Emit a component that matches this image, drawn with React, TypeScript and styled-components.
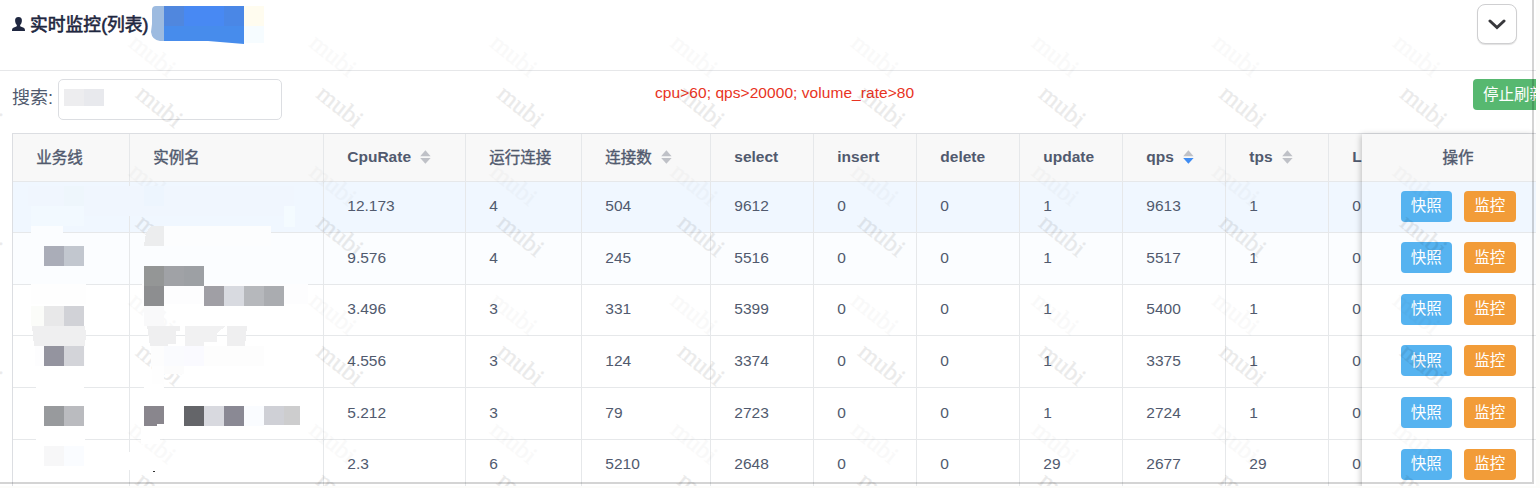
import React from 'react';
import styled, { createGlobalStyle } from 'styled-components';

const GlobalStyle = createGlobalStyle`
  * { box-sizing: border-box; }
  body {
    margin: 0;
    background: #fcfcfa;
    overflow: hidden;
    font-family: "Liberation Sans", "Noto Sans CJK SC", sans-serif;
    color: #515a6e;
  }
`;

const Page = styled.div`
  position: relative;
  width: 1536px;
  height: 486px;
  overflow: hidden;
  background: #fff;
`;

const Header = styled.header`
  display: flex;
  justify-content: space-between;
  align-items: flex-start;
  height: 71px;
  padding: 4px 19px 0 12px;
  border-bottom: 1px solid #e6e7e9;
`;

const Title = styled.h1`
  display: flex;
  align-items: center;
  gap: 5px;
  height: 40px;
  margin: 0;
  font-size: 17.8px;
  font-weight: 400;
  color: #1f2740;
  white-space: nowrap;
  -webkit-text-stroke: 0.6px #1f2740;
`;

const TitleText = styled.span`
  padding-bottom: 3px;
`;

const CollapseButton = styled.button`
  display: flex;
  align-items: center;
  justify-content: center;
  width: 40px;
  height: 40px;
  padding: 0;
  border: 1px solid #cfcfd1;
  border-radius: 8px;
  background: #fff;
  box-shadow: 0 1px 1px rgba(0, 0, 0, 0.12);
`;

const Toolbar = styled.div`
  display: flex;
  align-items: flex-start;
  height: 62px;
  padding: 8px 0 0 12px;
`;

const SearchLabel = styled.label`
  width: 46px;
  line-height: 38px;
  font-size: 18px;
  white-space: nowrap;
`;

const SearchInput = styled.input`
  width: 224px;
  height: 41px;
  border: 1px solid #dcdee2;
  border-radius: 5px;
  background: #fff;
  outline: none;
`;

const Hint = styled.span`
  margin-left: 373px;
  font-size: 15.5px;
  line-height: 28px;
  color: #e83323;
  white-space: nowrap;
  letter-spacing: 0.06px;
`;

const StopButton = styled.button`
  flex: none;
  width: 92px;
  height: 31px;
  margin-left: auto;
  margin-right: -29px;
  padding: 0 0 0 10px;
  border: 0;
  border-radius: 4px;
  background: #57b870;
  color: #fff;
  font: 15.5px/31px "Liberation Sans", "Noto Sans CJK SC", sans-serif;
  text-align: left;
  white-space: nowrap;
`;

const TableFrame = styled.div`
  display: flex;
  margin-left: 12px;
  border-left: 1px solid #dcdee2;
  border-top: 1px solid #dcdee2;
`;

const ScrollArea = styled.div`
  flex: none;
  width: 1349px;
  overflow: hidden;
`;

const FixedArea = styled.div`
  flex: none;
  width: 174px;
  z-index: 1;
  box-shadow: -2px 0 6px -1px rgba(0, 0, 0, 0.24);
`;

const Row = styled.div<{ $height: number; $tone?: string }>`
  display: flex;
  width: max-content;
  min-width: 100%;
  height: ${(p) => p.$height}px;
  background: ${(p) => p.$tone ?? '#fff'};
`;

const Cell = styled.div<{ $width: number; $head?: boolean }>`
  display: flex;
  flex: none;
  align-items: center;
  gap: 9px;
  width: ${(p) => p.$width}px;
  padding: 0 0 2px 23.3px;
  border-right: 1px solid #e6e8ea;
  border-bottom: 1px solid #e6e8ea;
  font-size: 15.5px;
  font-weight: ${(p) => (p.$head ? 700 : 400)};
  white-space: nowrap;
`;

const HeadCjk = styled.span`
  padding-bottom: 2px;
  font-weight: 400;
  -webkit-text-stroke: 0.4px #515a6e;
`;

const ActionCell = styled.div`
  display: flex;
  align-items: center;
  justify-content: center;
  gap: 12px;
  width: 174px;
  padding: 0 0 2px 18px;
  border-bottom: 1px solid #e6e8ea;
  font-size: 15.5px;
`;

const ActionButton = styled.button<{ $color: string }>`
  width: 51.5px;
  height: 31px;
  padding: 0;
  border: 0;
  border-radius: 4px;
  background: ${(p) => p.$color};
  color: #fff;
  font: 15.5px/30px "Liberation Sans", "Noto Sans CJK SC", sans-serif;
`;

const Overlay = styled.svg`
  position: absolute;
  inset: 0;
  z-index: 2;
  pointer-events: none;
`;

const WindowEdge = styled.div`
  position: absolute;
  left: 0;
  top: 0;
  z-index: 3;
  width: 1534px;
  height: 484px;
  border-right: 2px solid rgba(0, 0, 0, 0.17);
  border-bottom: 2px solid rgba(0, 0, 0, 0.17);
  pointer-events: none;
`;

type Column = { label: string; width: number; sort?: 'none' | 'desc' };

const columns: Column[] = [
  { label: '业务线', width: 117 },
  { label: '实例名', width: 194 },
  { label: 'CpuRate', width: 142, sort: 'none' },
  { label: '运行连接', width: 116 },
  { label: '连接数', width: 129, sort: 'none' },
  { label: 'select', width: 103 },
  { label: 'insert', width: 103 },
  { label: 'delete', width: 103 },
  { label: 'update', width: 103 },
  { label: 'qps', width: 103, sort: 'desc' },
  { label: 'tps', width: 103, sort: 'none' },
  { label: 'L', width: 103 },
];

const rows = [
  { height: 51, tone: '#f0f7ff', cells: ['', '', '12.173', '4', '504', '9612', '0', '0', '1', '9613', '1', '0'] },
  { height: 52, tone: '#fbfdff', cells: ['', '', '9.576', '4', '245', '5516', '0', '0', '1', '5517', '1', '0'] },
  { height: 51, cells: ['', '', '3.496', '3', '331', '5399', '0', '0', '1', '5400', '1', '0'] },
  { height: 52, cells: ['', '', '4.556', '3', '124', '3374', '0', '0', '1', '3375', '1', '0'] },
  { height: 52, cells: ['', '', '5.212', '3', '79', '2723', '0', '0', '1', '2724', '1', '0'] },
  { height: 51, cells: ['', '', '2.3', '6', '5210', '2648', '0', '0', '29', '2677', '29', '0'] },
];

const SortIcon = ({ active }: { active: boolean }) => (
  <svg width="12" height="14" viewBox="0 0 12 14">
    <path d="M.2 6.300 5.400.3l5.200 6z" fill="#bfc1c7" />
    <path d="M.2 7.900h10.400L5.400 13.800z" fill={active ? '#3f8cf2' : '#bfc1c7'} />
  </svg>
);

const UserIcon = () => (
  <svg width="13" height="14" viewBox="0 0 13 14">
    <path
      d="M6.500 0C8.900 0 10.100 1.600 9.900 3.900 9.700 5.800 9 7.100 8.200 7.900c-.2 1 .1 1.500 1 1.900l2.500.9c.9.4 1.300 1.300 1.300 3.300H0c0-2 .4-2.900 1.300-3.300l2.500-.9c.9-.4 1.200-.9 1-1.900C4 7.100 3.300 5.800 3.100 3.900 2.900 1.600 4.100 0 6.500 0z"
      fill="#1f2740"
    />
  </svg>
);

const watermarkX = [-22, 158.2, 338.8, 519.4, 700, 880.6, 1061.2, 1241.8, 1422.4];

const Watermarks = () => (
  <g fontFamily='"Liberation Serif", serif' fontSize="25" textAnchor="middle" strokeWidth="0.4">
    {watermarkX.map((x) => (
      <g key={x}>
        {[-21, 108, 237, 366, 495].map((y) => (
          <text key={y} transform={`translate(${x} ${y}) rotate(39)`} y="6" fill="#000" stroke="#000" opacity="0.08">
            mubi
          </text>
        ))}
        {[57, 186, 315, 444].map((y) => (
          <text key={y} transform={`translate(${x - 7} ${y}) rotate(39)`} y="6" fill="#000" stroke="#000" opacity="0.018">
            mubi
          </text>
        ))}
      </g>
    ))}
  </g>
);

// x, y, width, height, colour of each censored tile
const tiles: [number, number, number, number, string][] = [
  [164, 6, 20, 20, '#5087de'],
  [184, 6, 40, 20, '#4889f3'],
  [224, 6, 20, 20, '#4a87e6'],
  [244, 6, 20, 20, '#fffcef'],
  [244, 26, 20, 17, '#f6fcff'],
  [64, 89, 20, 17, '#ededef'],
  [84, 89, 20, 17, '#e8e9ed'],
  [28, 186, 266, 20, '#f0f6fe'],
  [64, 186, 20, 20, '#eef6fc'],
  [144, 186, 20, 20, '#edf5fe'],
  [31, 206, 53, 20, '#f2f9ff'],
  [84, 206, 200, 10, '#f0f6fe'],
  [284, 206, 11, 21, '#f4fbff'],
  [31, 226, 32, 20, '#fbfdff'],
  [31, 246, 55, 38, '#fbfdff'],
  [31, 284, 55, 20, '#fefefe'],
  [44, 246, 20, 20, '#aaadb8'],
  [64, 246, 20, 20, '#c2c7cf'],
  [164, 226, 107, 20, '#fcfdfe'],
  [142, 246, 145, 38, '#fbfdff'],
  [142, 284, 166, 20, '#fdfdfe'],
  [144, 266, 20, 20, '#949696'],
  [164, 266, 20, 20, '#a0a2a6'],
  [184, 266, 20, 20, '#9da0a4'],
  [144, 286, 20, 20, '#8d8e90'],
  [204, 286, 20, 20, '#a09fa5'],
  [224, 286, 20, 20, '#d8dae0'],
  [244, 286, 20, 20, '#b6b8bc'],
  [264, 286, 20, 20, '#aaacb0'],
  [31, 306, 13, 20, '#fbfcf9'],
  [44, 306, 20, 20, '#e8e8e9'],
  [64, 306, 20, 20, '#d1d2d7'],
  [144, 306, 20, 20, '#f9f9fa'],
  [35, 346, 50, 20, '#fdfdfe'],
  [44, 346, 20, 20, '#94949f'],
  [64, 346, 20, 20, '#d3d4d9'],
  [151, 346, 113, 20, '#fdfdfd'],
  [164, 346, 20, 20, '#fafbfe'],
  [184, 346, 20, 20, '#fafaff'],
  [152, 366, 12, 22, '#fefefe'],
  [164, 366, 20, 8, '#fcfcfc'],
  [36, 384, 48, 8, '#fff'],
  [144, 384, 19, 8, '#fff'],
  [44, 406, 20, 20, '#989a9d'],
  [64, 406, 20, 20, '#babbbf'],
  [144, 406, 20, 20, '#89868d'],
  [184, 406, 20, 20, '#646569'],
  [204, 406, 20, 20, '#d8d9df'],
  [224, 406, 20, 20, '#8a8994'],
  [244, 406, 20, 20, '#fafcff'],
  [264, 406, 20, 19, '#cfd0d6'],
  [284, 406, 16, 19, '#cdcdce'],
  [36, 434, 49, 10, '#fff'],
  [141, 426, 19, 18, '#fff'],
  [157, 424, 10, 4, '#fff'],
  [44, 446, 20, 20, '#f7f7f8'],
  [64, 446, 20, 20, '#fafcff'],
  [127, 452, 8, 18, '#fff'],
  [153, 471, 2, 1, '#333'],
];

const Mosaic = () => (
  <g shapeRendering="crispEdges">
    <path d="M156 6h8v35h-4q-8-1-9-9l1-8V10q0-4 4-4z" fill="#9dbbe0" shapeRendering="auto" />
    <path d="M164 26h80v18l-36-3h-44z" fill="#478cec" shapeRendering="auto" />
    {tiles.map(([x, y, w, h, c], i) => (
      <rect key={i} x={x} y={y} width={w} height={h} fill={c} />
    ))}
    <path d="M129 188h1v28h-1z" fill="#f0f6fe" />
    <path d="M144 246q1-15 7-20h13v20z" fill="#ecedee" />
    <path d="M32 326h53l1 8-1 12H34z" fill="#efeff0" />
    <path d="M147 326h33v5h-4v13h-8v2h-18z" fill="#efeff0" />
    <path d="M185 326h41l-9 7v9h-13v4h-19z" fill="#f1f1f2" />
    <path d="M227 326h20l-2 20h-18z" fill="#efeff0" />
  </g>
);

export default function App() {
  return (
    <>
      <GlobalStyle />
      <Page>
        <Header>
          <Title>
            <UserIcon />
            <TitleText>实时监控(列表)</TitleText>
          </Title>
          <CollapseButton aria-label="collapse">
            <svg width="18" height="12" viewBox="0 0 18 12" fill="none" stroke="#38383c" strokeWidth="3">
              <path d="m2 3 7 6.500 7-6.500" strokeLinecap="round" />
            </svg>
          </CollapseButton>
        </Header>
        <Toolbar>
          <SearchLabel htmlFor="search">搜索:</SearchLabel>
          <SearchInput id="search" />
          <Hint>cpu&gt;60; qps&gt;20000; volume_rate&gt;80</Hint>
          <StopButton>停止刷新</StopButton>
        </Toolbar>
        <TableFrame>
          <ScrollArea>
            <Row $height={48} $tone="#f8f8f8">
              {columns.map((col) => (
                <Cell key={col.label} $width={col.width} $head>
                  {/^[a-z]/i.test(col.label) ? col.label : <HeadCjk>{col.label}</HeadCjk>}
                  {col.sort && <SortIcon active={col.sort === 'desc'} />}
                </Cell>
              ))}
            </Row>
            {rows.map((row, r) => (
              <Row key={r} $height={row.height} $tone={row.tone}>
                {row.cells.map((value, c) => (
                  <Cell key={c} $width={columns[c].width}>
                    {value}
                  </Cell>
                ))}
              </Row>
            ))}
          </ScrollArea>
          <FixedArea>
            <Row $height={48} $tone="#f8f8f8">
              <ActionCell>
                <HeadCjk>操作</HeadCjk>
              </ActionCell>
            </Row>
            {rows.map((row, r) => (
              <Row key={r} $height={row.height} $tone={row.tone}>
                <ActionCell>
                  <ActionButton $color="#56b3f0">快照</ActionButton>
                  <ActionButton $color="#f29c38">监控</ActionButton>
                </ActionCell>
              </Row>
            ))}
          </FixedArea>
        </TableFrame>
        <Overlay width="1536" height="486">
          <Watermarks />
          <Mosaic />
        </Overlay>
        <WindowEdge />
      </Page>
    </>
  );
}
